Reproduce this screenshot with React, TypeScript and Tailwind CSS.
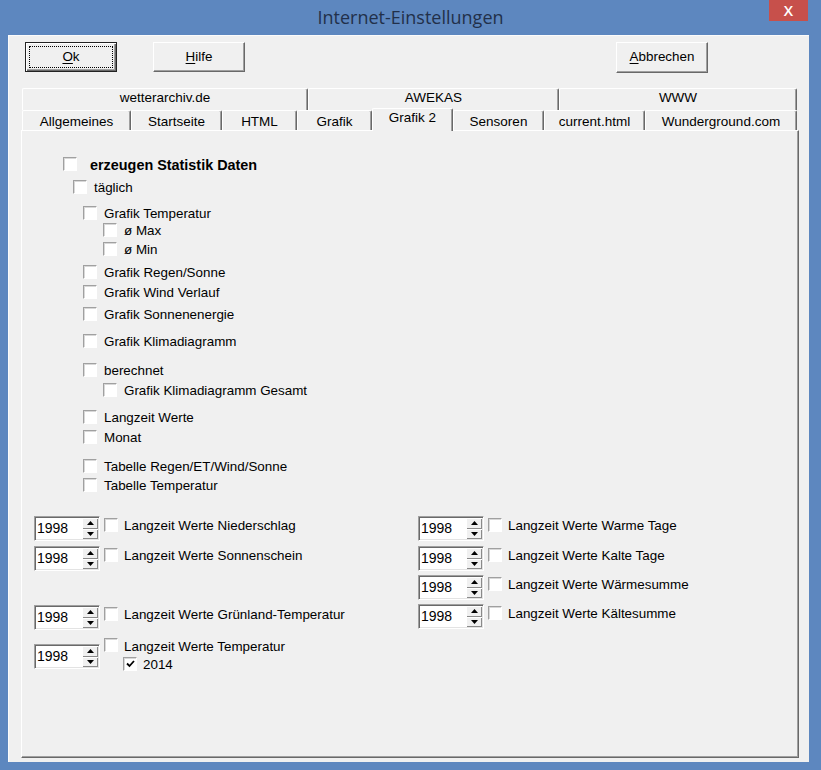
import React from "react";

function Box({ checked }: { checked?: boolean }) {
  return (
    <span className="flex h-[14px] w-[14px] shrink-0 items-center justify-center border border-t-[#a0a0a0] border-l-[#a0a0a0] border-r-white border-b-white bg-white shadow-[inset_1px_1px_0_#d8d8d8]">
      {checked && (
        <svg width="9" height="8" viewBox="0 0 9 8">
          <polyline points="1,3.5 3.5,6 8,1" fill="none" stroke="#000" strokeWidth="1.8" />
        </svg>
      )}
    </span>
  );
}

function CheckRow({
  label,
  ml,
  mt,
  gap,
  bold,
}: {
  label: string;
  ml: string;
  mt: string;
  gap: string;
  bold?: boolean;
}) {
  return (
    <div className={`flex h-[14px] items-center ${ml} ${mt}`}>
      <Box />
      <span
        className={`${gap} whitespace-nowrap pt-[2px] leading-[16px] ${
          bold ? "text-[14.4px] font-bold" : "text-[13.4px]"
        }`}
      >
        {label}
      </span>
    </div>
  );
}

function Spin() {
  return (
    <div className="flex h-[25px] w-[66px] shrink-0 border border-t-[#a0a0a0] border-l-[#a0a0a0] border-r-white border-b-white bg-white shadow-[inset_1px_1px_0_#696969,inset_-1px_-1px_0_#e3e3e3]">
      <div className="flex flex-1 items-center pb-[2px] pl-[2px] text-[14px] leading-none">1998</div>
      <div className="my-[1px] mr-[1px] flex w-[16px] flex-col">
        <div className="flex flex-1 items-center justify-center bg-[#f0f0f0] shadow-[inset_1px_1px_0_#ffffff,inset_-1px_-1px_0_#8a8a8a]">
          <svg width="7" height="4" viewBox="0 0 7 4">
            <polygon points="3.5,0 7,4 0,4" fill="#000" />
          </svg>
        </div>
        <div className="flex flex-1 items-center justify-center bg-[#f0f0f0] shadow-[inset_1px_1px_0_#ffffff,inset_-1px_-1px_0_#8a8a8a]">
          <svg width="7" height="4" viewBox="0 0 7 4">
            <polygon points="0,0 7,0 3.5,4" fill="#000" />
          </svg>
        </div>
      </div>
    </div>
  );
}

function SpinRow({ label, mt }: { label: string; mt: string }) {
  return (
    <div className={`flex items-start ${mt}`}>
      <Spin />
      <div className="ml-[4px] mt-[2px]">
        <Box />
      </div>
      <span className="ml-[6px] whitespace-nowrap pt-[1px] text-[13.4px] leading-[18px]">{label}</span>
    </div>
  );
}

function Tab({
  label,
  w,
  h,
  extra,
}: {
  label: string;
  w: string;
  h: string;
  extra?: string;
}) {
  return (
    <div
      className={`flex shrink-0 items-center justify-center whitespace-nowrap rounded-t-[2px] border-t border-l border-r border-t-white border-l-white border-r-[#696969] bg-[#f0f0f0] text-[13.5px] shadow-[inset_-1px_0_0_#a0a0a0] ${w} ${h} ${extra ?? ""}`}
    >
      {label}
    </div>
  );
}

function Btn({
  children,
  def,
  h,
  ml,
}: {
  children: React.ReactNode;
  def?: boolean;
  h: string;
  ml: string;
}) {
  return (
    <div
      className={`relative flex w-[92px] shrink-0 items-center justify-center bg-[#f0f0f0] text-[13.4px] ${h} ${ml} ${
        def
          ? "border border-[#222222] shadow-[inset_1px_1px_0_#ffffff,inset_-1px_-1px_0_#696969,inset_-2px_-2px_0_#a0a0a0]"
          : "border border-t-white border-l-white border-r-[#696969] border-b-[#696969] shadow-[inset_-1px_-1px_0_#a0a0a0]"
      }`}
    >
      {def && <span className="absolute inset-[3px] border border-dotted border-black" />}
      <span>{children}</span>
    </div>
  );
}

export default function App() {
  return (
    <div className="flex h-[770px] w-[821px] flex-col overflow-hidden bg-[#5d87bf] font-['Liberation_Sans',Arial,sans-serif] text-black">
      {/* title bar */}
      <div className="relative flex h-[35px] shrink-0 items-center justify-center">
        <span className="font-['Open_Sans',sans-serif] text-[18px] text-[#22304a]">Internet-Einstellungen</span>
        <div className="absolute right-[13px] top-0 flex h-[21px] w-[39px] items-center justify-center bg-[#c7504b] font-['Open_Sans',sans-serif] text-[15px] font-semibold text-white">
          X
        </div>
      </div>

      {/* client area */}
      <div className="ml-[8px] flex h-[727px] w-[801px] flex-col border-l border-t border-[#fbfbfb] bg-[#f0f0f0]">
        {/* buttons */}
        <div className="mt-[6px] flex h-[30px] items-start">
          <Btn def h="h-[30px]" ml="ml-[16px]">
            <span className="underline underline-offset-2">O</span>k
          </Btn>
          <Btn h="h-[30px]" ml="ml-[36px]">
            <span className="underline underline-offset-2">H</span>ilfe
          </Btn>
          <Btn h="h-[31px]" ml="ml-[371px]">
            <span className="underline underline-offset-2">A</span>bbrechen
          </Btn>
        </div>

        {/* tabs row 1 */}
        <div className="ml-[13px] mt-[16px] flex">
          <Tab label="wetterarchiv.de" w="w-[286px]" h="h-[22px]" extra="pb-[3px]" />
          <Tab label="AWEKAS" w="w-[251px]" h="h-[22px]" extra="pb-[3px]" />
          <Tab label="WWW" w="w-[238px]" h="h-[22px]" extra="pb-[3px]" />
        </div>
        {/* tabs row 2 */}
        <div className="relative z-10 ml-[13px] flex h-[20px] items-start">
          <Tab label="Allgemeines" w="w-[109px]" h="h-[20px]" extra="pt-[3px]" />
          <Tab label="Startseite" w="w-[91px]" h="h-[20px]" extra="pt-[3px]" />
          <Tab label="HTML" w="w-[75px]" h="h-[20px]" extra="pt-[3px]" />
          <Tab label="Grafik" w="w-[75px]" h="h-[20px]" extra="pt-[3px]" />
          <Tab label="Grafik 2" w="w-[81px]" h="h-[23px]" extra="-mt-[2px] pb-[3px]" />
          <Tab label="Sensoren" w="w-[91px]" h="h-[20px]" extra="pt-[3px]" />
          <Tab label="current.html" w="w-[101px]" h="h-[20px]" extra="pt-[3px]" />
          <Tab label="Wunderground.com" w="w-[152px]" h="h-[20px]" extra="pt-[3px]" />
        </div>

        {/* panel */}
        <div className="ml-[12px] flex h-[628px] w-[778px] flex-col border border-t-white border-l-white border-r-[#696969] border-b-[#696969] shadow-[inset_-1px_-1px_0_#a0a0a0]">
          <CheckRow label="erzeugen Statistik Daten" bold ml="ml-[41px]" mt="mt-[26px]" gap="ml-[13px]" />
          <CheckRow label="täglich" ml="ml-[51px]" mt="mt-[9px]" gap="ml-[7px]" />
          <CheckRow label="Grafik Temperatur" ml="ml-[61px]" mt="mt-[12px]" gap="ml-[7px]" />
          <CheckRow label="ø Max" ml="ml-[81px]" mt="mt-[3px]" gap="ml-[7px]" />
          <CheckRow label="ø Min" ml="ml-[81px]" mt="mt-[5px]" gap="ml-[7px]" />
          <CheckRow label="Grafik Regen/Sonne" ml="ml-[61px]" mt="mt-[9px]" gap="ml-[7px]" />
          <CheckRow label="Grafik Wind Verlauf" ml="ml-[61px]" mt="mt-[6px]" gap="ml-[7px]" />
          <CheckRow label="Grafik Sonnenenergie" ml="ml-[61px]" mt="mt-[8px]" gap="ml-[7px]" />
          <CheckRow label="Grafik Klimadiagramm" ml="ml-[61px]" mt="mt-[13px]" gap="ml-[7px]" />
          <CheckRow label="berechnet" ml="ml-[61px]" mt="mt-[15px]" gap="ml-[7px]" />
          <CheckRow label="Grafik Klimadiagramm Gesamt" ml="ml-[81px]" mt="mt-[6px]" gap="ml-[7px]" />
          <CheckRow label="Langzeit Werte" ml="ml-[61px]" mt="mt-[13px]" gap="ml-[7px]" />
          <CheckRow label="Monat" ml="ml-[61px]" mt="mt-[6px]" gap="ml-[7px]" />
          <CheckRow label="Tabelle Regen/ET/Wind/Sonne" ml="ml-[61px]" mt="mt-[15px]" gap="ml-[7px]" />
          <CheckRow label="Tabelle Temperatur" ml="ml-[61px]" mt="mt-[5px]" gap="ml-[7px]" />

          <div className="mt-[24px] flex">
            {/* left column */}
            <div className="ml-[12px] flex w-[384px] shrink-0 flex-col">
              <SpinRow label="Langzeit Werte Niederschlag" mt="mt-0" />
              <SpinRow label="Langzeit Werte Sonnenschein" mt="mt-[5px]" />
              <SpinRow label="Langzeit Werte Grünland-Temperatur" mt="mt-[34px]" />
              <div className="mt-[8px] flex items-start">
                <div className="mt-[6px]">
                  <Spin />
                </div>
                <div className="ml-[4px]">
                  <Box />
                </div>
                <div className="ml-[6px] flex flex-col">
                  <span className="whitespace-nowrap pt-[1px] text-[13.4px] leading-[16px]">Langzeit Werte Temperatur</span>
                  <div className="-ml-[1px] mt-[2px] flex h-[14px] items-center">
                    <Box checked />
                    <span className="ml-[6px] pt-[1px] text-[13.4px] leading-[16px]">2014</span>
                  </div>
                </div>
              </div>
            </div>
            {/* right column */}
            <div className="flex flex-col">
              <SpinRow label="Langzeit Werte Warme Tage" mt="mt-0" />
              <SpinRow label="Langzeit Werte Kalte Tage" mt="mt-[5px]" />
              <SpinRow label="Langzeit Werte Wärmesumme" mt="mt-[4px]" />
              <SpinRow label="Langzeit Werte Kältesumme" mt="mt-[4px]" />
            </div>
          </div>
        </div>
      </div>
    </div>
  );
}
